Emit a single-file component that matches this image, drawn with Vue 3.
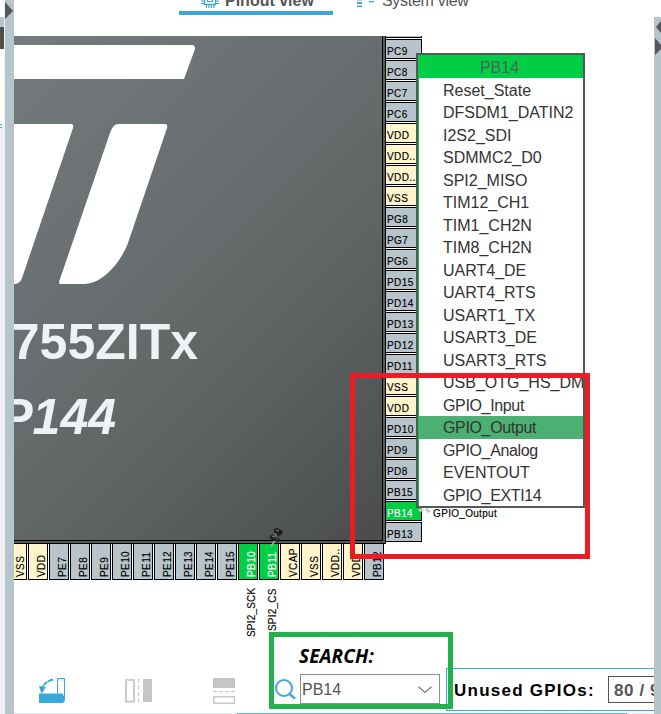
<script setup>
const side = [
  'PC9', 'PC8', 'PC7', 'PC6', 'VDD', 'VDD..', 'VDD..', 'VSS', 'PG8', 'PG7', 'PG6', 'PD15',
  'PD14', 'PD13', 'PD12', 'PD11', 'VSS', 'VDD', 'PD10', 'PD9', 'PD8', 'PB15', 'PB14', 'PB13'
]
const bottom = [
  'VSS', 'VDD', 'PE7', 'PE8', 'PE9', 'PE10', 'PE11', 'PE12', 'PE13', 'PE14', 'PE15',
  'PB10', 'PB11', 'VCAP', 'VSS', 'VDD..', 'VDD', 'PB12'
]
const nets = { PB10: 'SPI2_SCK', PB11: 'SPI2_CS', PB14: 'GPIO_Output' }
const kind = (n) => (nets[n] ? 'used' : n[0] === 'V' ? 'power' : 'io')
const functions = [
  'Reset_State', 'DFSDM1_DATIN2', 'I2S2_SDI', 'SDMMC2_D0', 'SPI2_MISO', 'TIM12_CH1',
  'TIM1_CH2N', 'TIM8_CH2N', 'UART4_DE', 'UART4_RTS', 'USART1_TX', 'USART3_DE',
  'USART3_RTS', 'USB_OTG_HS_DM', 'GPIO_Input', 'GPIO_Output', 'GPIO_Analog',
  'EVENTOUT', 'GPIO_EXTI14'
]
</script>

<template>
  <div class="window">
    <aside class="left">
      <div class="panel">
        <i class="gap"></i><i class="head"></i><i class="dark"></i><i class="blank"></i>
        <i class="rest"><b></b></i>
      </div>
      <div class="divider">
        <svg width="9" height="20" viewBox="0 0 9 20"><path d="M0 2L8 11L0 19Z" fill="#55565a" /></svg>
      </div>
    </aside>

    <main>
      <nav class="tabs">
        <div class="tab active">
          <svg class="chip-icon" width="18" height="16" viewBox="0 0 18 16" fill="none" stroke="#39a9dc">
            <rect x="3.5" y="-2" width="11" height="14.5" stroke-width="1.4" />
            <rect x="6.5" y="1" width="5" height="8.5" />
            <path d="M5.5 13v3M8 13v3M10.500 13v3M13 13v3M0 6.500h3M0 9h3M0 11.500h3M15 6.500h3M15 9h3M15 11.500h3" stroke-width="1.2" />
          </svg>
          <span>Pinout view</span>
        </div>
        <div class="tab">
          <svg width="18" height="16" viewBox="0 0 18 16" fill="#39a9dc">
            <path d="M0 6h5v1.500H0zM0 9h5v2H0zM0 12.500h5v1.500H0zM12 8h5v1.300h-5z" />
          </svg>
          <span>System view</span>
        </div>
      </nav>

      <section class="board">
        <div class="body">
          <svg class="logo" width="200" height="260" viewBox="14 36 200 260" fill="#fff">
            <path d="M14 45H192Q195 45 195 49L184 79H14Z" />
            <path d="M14 124H71Q74 124 73 128L22 278Q20 284 14 284Z" />
            <path d="M118 124H165Q168 124 167 128L129 240C123 259 104 284 84 284H60Q59 284 59 282L110 133Q113 124 118 124Z" />
          </svg>
          <div class="name">755ZITx</div>
          <div class="package">P144</div>
        </div>
        <div class="side">
          <i class="stub"></i>
          <div v-for="(p, i) in side" :key="i" class="pin" :class="kind(p)">
            {{ p }}<span v-if="nets[p]" class="net">{{ nets[p] }}</span>
          </div>
        </div>
        <div class="bottom">
          <div v-for="(p, i) in bottom" :key="i" class="col">
            <div class="vpin" :class="kind(p)"><span>{{ p }}</span></div>
            <div v-if="nets[p]" class="vnet">{{ nets[p] }}</div>
          </div>
        </div>
      </section>

      <footer>
        <div class="tools">
          <svg width="28" height="28" viewBox="38 676 28 28">
            <path d="M57.500 677.500H64.500V697.500H57.500Z" fill="#fff" stroke="#39a9dc" />
            <path d="M58 678h6v2h-6z" fill="#d7eef8" />
            <path d="M39 692.500h24v2h2v5l-2 2.500H39z" fill="#39a9dc" />
            <path d="M53 678.500Q44 681 42.500 687" fill="none" stroke="#39a9dc" stroke-width="1.9" stroke-dasharray="5 .7" />
            <path d="M39 685L46 686L41.500 693Z" fill="#39a9dc" />
          </svg>
          <svg width="28" height="26" viewBox="125 677 28 26">
            <path d="M126 679h8v21.500h-8z" fill="#fff" stroke="#c9c9c9" stroke-width="2" />
            <path d="M125 678h10v2h-10z" fill="#d3d3d3" />
            <path d="M138.500 678v24" stroke="#c9c9c9" stroke-width="1.300" stroke-dasharray="4 2.500" />
            <path d="M143 678h9v23h-9z" fill="#c6c6c6" />
          </svg>
          <svg width="24" height="28" viewBox="213 676 24 28">
            <path d="M213 677h22v10h-22z" fill="#c6c6c6" />
            <path d="M213 690.500h22" stroke="#c9c9c9" stroke-width="1.200" stroke-dasharray="4 2" />
            <path d="M213.800 695.800h20.500v6.500h-20.500z" fill="#fff" stroke="#c9c9c9" stroke-width="1.500" />
          </svg>
        </div>
        <div class="search">
          <h2>SEARCH:</h2>
          <div class="field">
            <svg width="24" height="24" viewBox="0 0 24 24" fill="none" stroke="#39a9dc" stroke-width="2">
              <circle cx="10" cy="11" r="8" /><path d="M15.500 17L21 21.500" stroke-width="2.500" />
            </svg>
            <div class="combo">
              <span>PB14</span>
              <svg width="14" height="8" viewBox="0 0 14 8" fill="none" stroke="#777" stroke-width="1.200"><path d="M.5.8L7 6.500L13.500.8" /></svg>
            </div>
          </div>
        </div>
        <div class="unused"><span>Unused GPIOs:</span><b>80 / 96</b></div>
      </footer>
      <div class="progress"><i></i></div>

      <div class="menu">
        <header>PB14</header>
        <ul>
          <li v-for="f in functions" :key="f" :class="{ selected: f === 'GPIO_Output', gpio: f.startsWith('GPIO') }">{{ f }}</li>
        </ul>
      </div>
      <svg class="menu-pin" width="16" height="6" viewBox="0 0 16 6"><path d="M0 2L4 0L6 2L9 0L13 3L10 5L7 2L2 4Z" fill="#ccc" /></svg>
      <svg class="pushpin" width="18" height="22" viewBox="0 0 18 22">
        <path d="M6.500 13L3 18.500" stroke="#aaa" stroke-width="1.600" />
        <path d="M2 8L5 6L12 11L12 13L9 14L2 11Z" fill="#222" />
        <path d="M5 8L7 3L13 6L10 12Z" fill="#484848" />
        <path d="M6 1L9 0L15 3L14 6L11 8L6 4Z" fill="#1e1e1e" />
        <path d="M8 5L7 9M8 2L11 3M4 8L6 9" stroke="#888" />
      </svg>
      <div class="highlight"></div>
    </main>

    <aside class="right">
      <svg width="7" height="40" viewBox="0 0 7 40" fill="#55565a"><path d="M7 4L2 10L7 16ZM1 21L7 28V32L1 38Z" /></svg>
    </aside>
  </div>
</template>

<style>
body { background: #fff; }
</style>

<style scoped>
* { box-sizing: border-box; }
.window {
  display: flex; width: 661px; height: 714px; overflow: hidden; background: #fff;
  font-family: "Liberation Sans", Arial, sans-serif;
}
svg { display: block; flex: none; }
.left { display: flex; width: 14px; flex: none; }
.panel { width: 5px; display: flex; flex-direction: column; border-right: 1px solid #f0f1f4; }
.panel i { display: block; }
.gap { height: 17px; }
.head { height: 10px; background: #b8c4cb; }
.dark { height: 22px; background: #4f504d; }
.blank { height: 75px; }
.rest { flex: 1; background: #f0f1f4; }
.rest b { display: block; width: 2px; height: 4px; border-top: 1px solid #39a9dc; border-bottom: 1px solid #39a9dc; }
.divider { width: 9px; background: #b8c4cb; }
.right { width: 7px; flex: none; margin-top: 17px; background: #b8c4cb; }

main { position: relative; width: 640px; height: 714px; overflow: hidden; display: flex; flex-direction: column; }
.tabs { height: 36px; flex: none; display: flex; padding-left: 165px; color: #555; font-size: 16px; }
.tab { display: flex; height: 15px; padding-left: 15px; gap: 7px; line-height: 18px; white-space: nowrap; letter-spacing: -.3px; }
.tab span { margin-top: -8px; }
.tab svg { margin-top: -7px; }
.tab .chip-icon { margin-top: -8px; margin-left: 7px; }
.tab.active { width: 154px; padding-left: 15px; gap: 6px; font-weight: bold; letter-spacing: 0; border-bottom: 4px solid #39a9dc; }
.tab:last-child { margin-left: 9px; }

.board { height: 596px; flex: none; display: grid; grid-template-columns: 372px 36px; grid-template-rows: 508px 88px; }
.body {
  background: linear-gradient(135deg, #74797c 0%, #6a7072 35%, #5e6262 65%, #4a4c4c 100%);
  box-shadow: inset -1px -1px #000, inset -3px -3px #575b5c, inset -4px -4px #000;
  color: #f0f1f4; font-weight: bold; font-size: 50px; line-height: 58px; overflow: hidden;
}
.logo { height: 260px; }
.name { width: 184px; display: flex; justify-content: flex-end; margin-top: 17px; }
.package { width: 102px; display: flex; justify-content: flex-end; margin-top: 17px; font-style: italic; }
.side { display: flex; flex-direction: column; gap: 1px; }
.stub { display: block; height: 2px; background: #b8c4cb; border-bottom: 1px solid #000; border-right: 1px solid #000; }
.pin {
  height: 20px; flex: none; border: 1px solid #000; border-left: 0; padding: 3px 0 0 1px;
  white-space: nowrap; line-height: 18px;
}
.pin, .vpin, .vnet { font-size: 10px; letter-spacing: .4px; color: #000; -webkit-text-stroke: .15px; }
.io { background: #b8c4cb; }
.power { background: #fff4cc; }
.pin.used, .vpin.used { background: #00cf45; color: #fff; }
.net { color: #000; margin-left: 20px; letter-spacing: .3px; }
.bottom { grid-column: 1 / 3; display: flex; gap: 1px; margin-left: -7px; margin-top: -1px; height: 37px; }
.col { width: 20px; flex: none; }
.col:first-child { clip-path: inset(0 0 0 7px); }
.vpin { width: 20px; height: 37px; border: 1px solid #000; }
.vpin span, .vnet { display: block; writing-mode: vertical-rl; transform: rotate(180deg); line-height: 18px; white-space: nowrap; }
.vpin span { width: 18px; height: 33px; margin-left: 4px; }
.vnet { width: 18px; height: 50px; margin: 8px 0 0 5px; text-align: right; letter-spacing: .2px; }

footer { height: 81px; flex: none; display: flex; }
.tools { width: 255px; flex: none; display: flex; align-items: center; padding: 36px 0 0 24px; }
.tools svg:nth-child(2) { margin-left: 59px; }
.tools svg:nth-child(3) { margin-left: 60px; }
.search { position: relative; z-index: 1; width: 184px; height: 77px; flex: none; border: 5px solid #22b14c; }
.search h2 { margin: 6px 0 0 25px; font: italic bold 19px/26px "Open Sans", sans-serif; letter-spacing: .1px; color: #000; }
.field { display: flex; align-items: center; margin-top: 5px; }
.field > svg { margin-right: 2px; }
.combo { width: 140px; height: 30px; border: 1px solid #8a8f96; display: flex; align-items: center; justify-content: space-between; padding: 2px 7px 0 1px; color: #555; font-size: 16px; }
.unused { width: 215px; height: 43px; flex: none; margin: 36px 0 0 -7px; padding-left: 7px; border: 1px solid #39a9dc; display: flex; align-items: center; }
.unused span { width: 154px; flex: none; font-weight: bold; font-size: 17px; letter-spacing: 1.25px; white-space: nowrap; padding-top: 2px; }
.unused b { width: 90px; flex: none; height: 27px; border: 1px solid #555; padding-left: 5px; line-height: 28px; font-size: 17px; letter-spacing: .6px; color: #555; }
.progress { height: 1px; background: #e0edf4; padding-left: 223px; }
.progress i { display: block; width: 390px; height: 1px; background: #5eb6e0; }

.menu { position: absolute; left: 402px; top: 53px; width: 169px; height: 455px; border: 2px solid #555858; background: #fff; overflow: hidden; font-size: 16px; }
.menu header { height: 23px; line-height: 25px; padding-right: 2px; text-align: center; background: #00cf45; color: #4f6357; }
.menu ul { margin: 0; padding: .5px 0 0; list-style: none; border-left: 1px solid #00cf45; }
.menu li { height: 22.5px; line-height: 24.5px; padding-left: 24px; color: #333; white-space: nowrap; }
.menu .gpio { letter-spacing: -.35px; }
.menu .selected { background: #4bb071; }
.menu-pin { position: absolute; left: 404px; top: 508px; }
.pushpin { position: absolute; left: 254px; top: 528px; }
.highlight { position: absolute; left: 336px; top: 373px; width: 240px; height: 186px; border: 5px solid #ed1c24; }
</style>
